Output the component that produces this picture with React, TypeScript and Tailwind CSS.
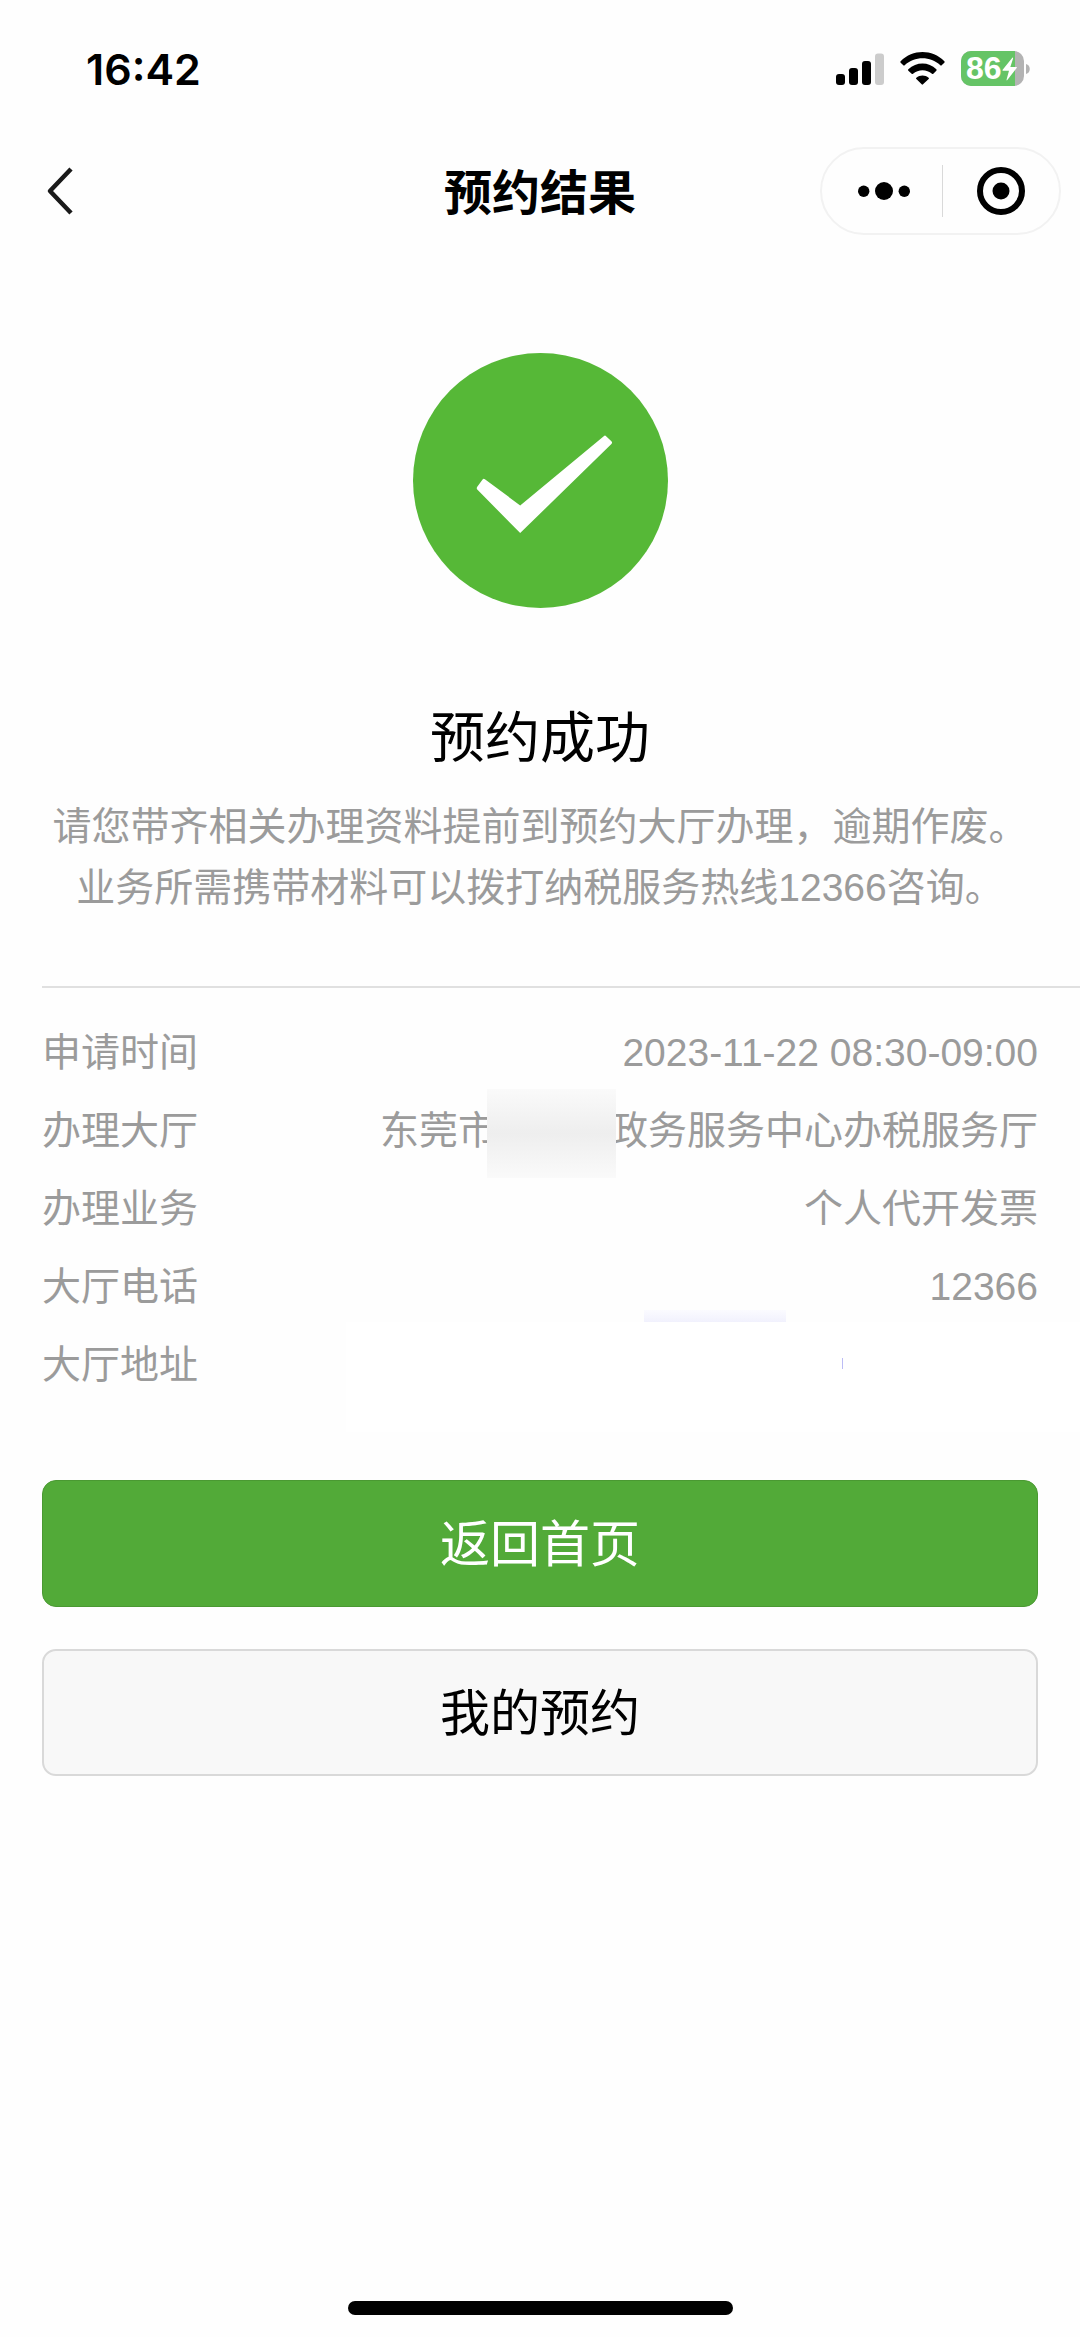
import React from 'react';

interface Row {
    label: string;
    value: React.ReactNode;
}

const SignalIcon = () => (
    <svg width="48" height="32" viewBox="0 0 48 32" aria-hidden="true">
        <rect x="0" y="21" width="9" height="11" rx="3" fill="#000" />
        <rect x="13" y="15" width="9" height="17" rx="3" fill="#000" />
        <rect x="26" y="8" width="9" height="24" rx="3" fill="#000" />
        <rect x="39" y="0.5" width="9" height="31.5" rx="3" fill="#cccccc" />
    </svg>
);

const WifiIcon = () => (
    <svg width="45" height="33" viewBox="0 0 135 99" aria-hidden="true">
        <path d="M2 28C38 -9 97 -9 133 28Q135 30 133 32L125 40Q123 42 121 40C91 12 44 12 14 40Q12 42 10 40L2 32Q0 30 2 28Z" />
        <path d="M25 52C49 29 86 29 109 52Q111 54 109 56L100 65Q98 67 96 65C80 51 55 51 39 65Q37 67 35 65L25 56Q23 54 25 52Z" />
        <path d="M49 77C60 68 75 68 86 77Q88 79 86 81L69 97Q67 99 65 97L49 81Q47 79 49 77Z" />
    </svg>
);

const BatteryIcon = () => (
    <div className="relative flex items-center gap-[2px]">
        <div className="flex h-[35px] w-[63px] overflow-hidden rounded-[10px] bg-[#b3b3b3]">
            <div className="h-full w-[86%] bg-[#65c466]" />
        </div>
        <svg width="4" height="10" viewBox="0 0 4 10" aria-hidden="true">
            <path d="M0 0C5 1 5 9 0 10Z" fill="#b3b3b3" />
        </svg>
        <div className="absolute inset-y-0 left-[5px] flex items-center text-white">
            <span className="font-['Liberation_Sans'] text-[32px] leading-[35px] font-bold">86</span>
            <svg width="15" height="24" viewBox="0 0 45 70" aria-hidden="true">
                <path d="M31 1Q34 0 33 4L25 29H43Q46 29 44 32L16 68Q13 71 14 66L21 40H3Q0 40 2 37Z" fill="#fff" />
            </svg>
        </div>
    </div>
);

const StatusBar = () => (
    <div className="flex h-[137px] items-center justify-between pr-[50px] pl-[86px]">
        <span className="font-['Inter'] text-[43px] leading-[48px] font-semibold">16:42</span>
        <div className="flex items-center gap-4">
            <SignalIcon />
            <WifiIcon />
            <BatteryIcon />
        </div>
    </div>
);

const NavBar = () => (
    <header className="grid h-[108px] grid-cols-[1fr_auto_1fr] items-center px-[19px]">
        <button type="button" aria-label="返回" className="justify-self-start pl-[27px]">
            <svg width="28" height="48" viewBox="0 0 28 48" fill="none" stroke="#1a1a1a" strokeWidth="4.5">
                <path d="M25 2L4 24L25 46" strokeLinejoin="round" />
            </svg>
        </button>
        <h1 className="pt-1.5 text-[48px] leading-[64px] font-bold">预约结果</h1>
        <div className="flex h-22 w-[241px] items-center justify-self-end rounded-full border-2 border-[#f2f2f2]">
            <button type="button" aria-label="更多" className="flex flex-1 justify-center pl-1">
                <svg width="52" height="18" viewBox="0 0 52 18">
                    <circle cx="5.7" cy="9.3" r="5.7" />
                    <circle cx="26" cy="9" r="9" />
                    <circle cx="46.3" cy="9.3" r="5.7" />
                </svg>
            </button>
            <div className="h-13 w-px bg-[#d9d9d9]" />
            <button type="button" aria-label="关闭" className="flex flex-1 justify-center">
                <svg width="48" height="48" viewBox="0 0 48 48">
                    <circle cx="24" cy="24" r="21" fill="none" stroke="#000" strokeWidth="6" />
                    <circle cx="24" cy="24" r="8.5" />
                </svg>
            </button>
        </div>
    </header>
);

const SuccessIcon = () => (
    <svg width="255" height="255" viewBox="0 0 766 766" aria-hidden="true">
        <circle cx="383" cy="383" r="383" fill="#56b837" />
        <path
            d="M209 380Q212 376 216 379L322 458L573 250Q577 246 580 250L596 265Q600 269 596 273L322 541L193 410Q190 406 193 402Z"
            fill="#fff"
        />
    </svg>
);

const rows: Row[] = [
    { label: '申请时间', value: '2023-11-22 08:30-09:00' },
    {
        label: '办理大厅',
        value: (
            <span className="flex">
                东莞市
                {/* town name is masked */}
                <span className="relative w-28">
                    <span className="absolute -top-[3px] -right-[7px] -left-[10px] h-[89px] bg-linear-to-b from-[#fafafa] via-[#eeeeee] to-[#fafafa]" />
                </span>
                政务服务中心办税服务厅
            </span>
        ),
    },
    { label: '办理业务', value: '个人代开发票' },
    { label: '大厅电话', value: '12366' },
    {
        label: '大厅地址',
        value: (
            <span className="relative block h-full w-[692px]">
                <span className="absolute -top-4 left-[298px] h-3 w-[142px] bg-linear-to-b from-[#fbfbff] to-[#f1f1fd]" />
                <span className="absolute -top-1 -right-[42px] left-0 h-[110px] bg-white" />
                <span className="absolute top-8 left-[496px] h-[11px] w-px bg-[#bcbcf5]" />
            </span>
        ),
    },
];

export default function App() {
    return (
        <div
            lang="zh-CN"
            className="flex min-h-screen flex-col bg-[#fefefe] font-['Liberation_Sans','Noto_Sans_CJK_SC',sans-serif] text-black"
        >
            <StatusBar />
            <NavBar />

            <main className="flex flex-col">
                <section className="flex flex-col items-center px-[42px] pt-[108px] pb-[68px] text-center">
                    <SuccessIcon />
                    <h2 className="mt-[91px] text-[55px] leading-[78px]">预约成功</h2>
                    <p className="mt-[19px] text-[39px] leading-[61px] text-[#9b9b9b]">
                        请您带齐相关办理资料提前到预约大厅办理，逾期作废。
                        <br />
                        业务所需携带材料可以拨打纳税服务热线12366咨询。
                    </p>
                </section>

                <dl className="ml-[42px] border-t-2 border-[#e0e0e0] pt-[26px] pr-[42px] text-[39px] leading-[78px] text-[#9b9b9b]">
                    {rows.map((row) => (
                        <div key={row.label} className="flex h-[78px] justify-between">
                            <dt>{row.label}</dt>
                            <dd>{row.value}</dd>
                        </div>
                    ))}
                </dl>

                <div className="mt-[76px] flex flex-col gap-[42px] px-[42px]">
                    <button
                        type="button"
                        className="h-[127px] rounded-[14px] border border-[#4a9932] bg-[#52aa38] pt-1 text-[50px] text-white"
                    >
                        返回首页
                    </button>
                    <button
                        type="button"
                        className="h-[127px] rounded-[14px] border-2 border-[#d9d9d9] bg-[#f8f8f8] pt-1 text-[50px]"
                    >
                        我的预约
                    </button>
                </div>
            </main>

            {/* home indicator */}
            <div className="mx-auto mt-auto mb-[22px] h-[14px] w-[385px] rounded-full bg-black" />
        </div>
    );
}
